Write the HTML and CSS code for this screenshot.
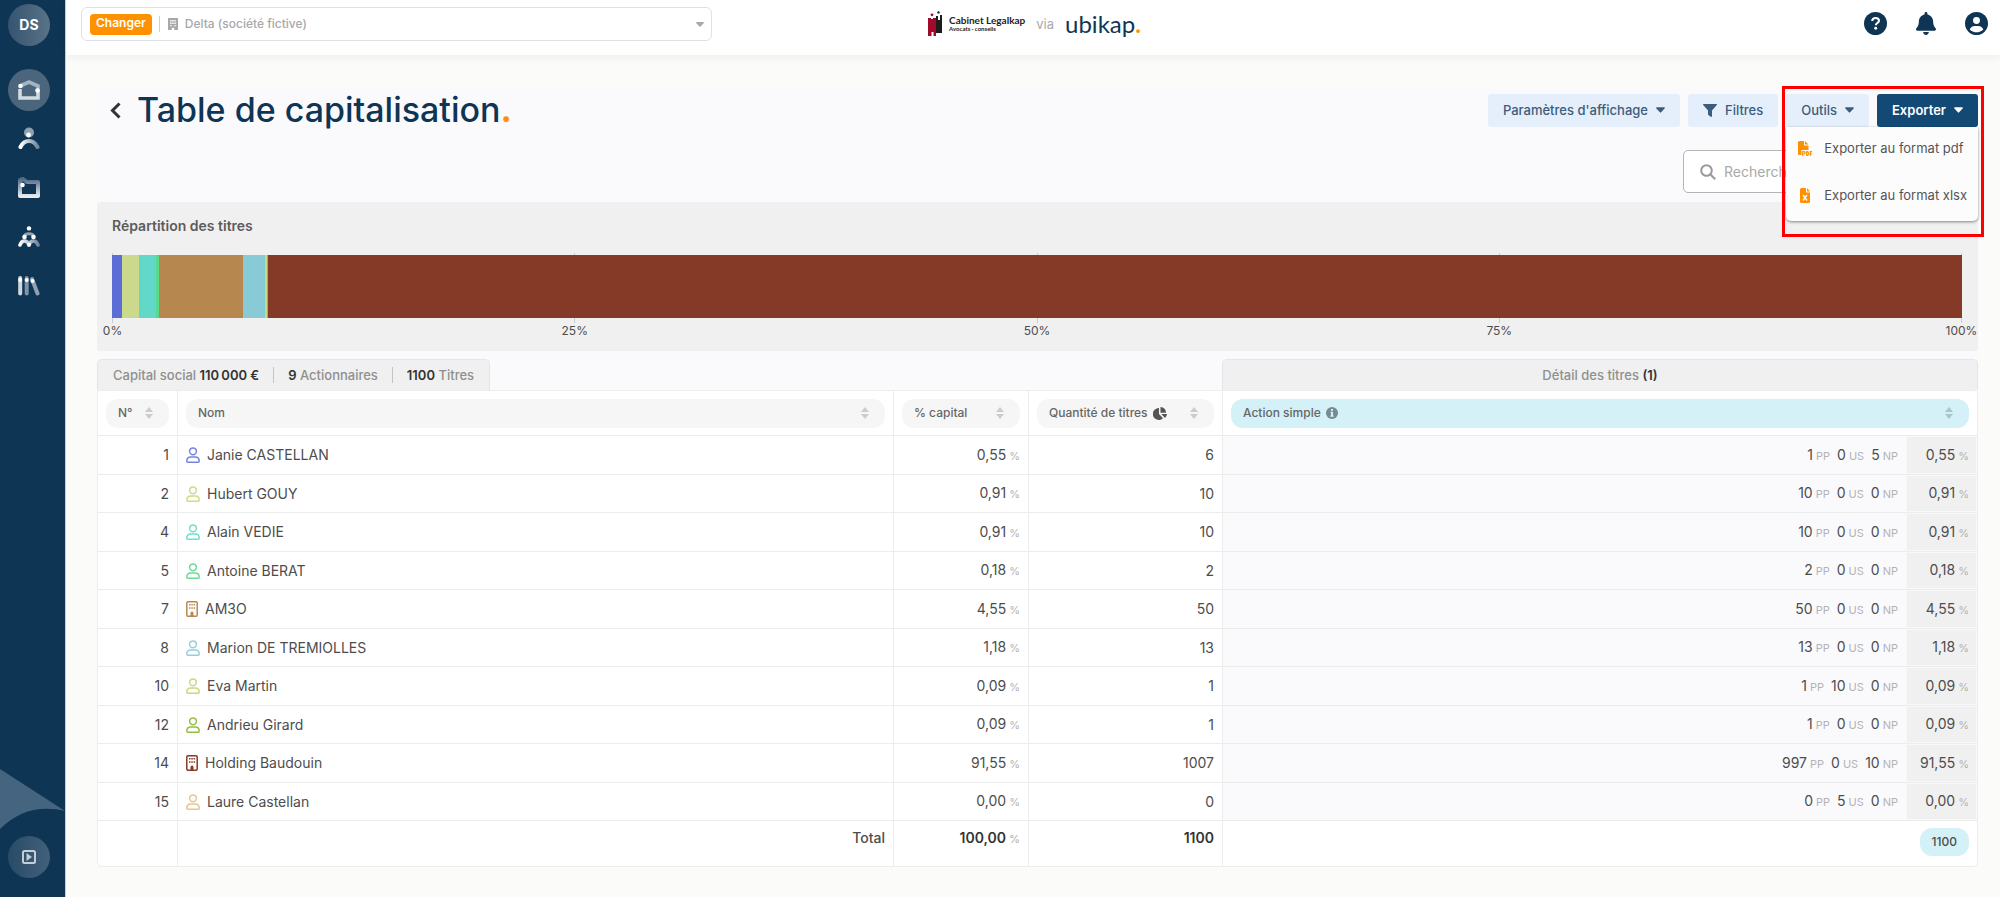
FILE: index.html
```html
<!DOCTYPE html>
<html lang="fr">
<head>
<meta charset="utf-8">
<title>Table de capitalisation</title>
<link rel="stylesheet" href="styles.css">
</head>
<body>
<svg class="defs" aria-hidden="true">
  <defs>
    <linearGradient id="fade-r" x1="0" x2="1" y1="0" y2="0"><stop offset="0" stop-color="#fff"/><stop offset="1" stop-color="#6f879b"/></linearGradient>
    <linearGradient id="fade-d" x1="0" x2="0" y1="0" y2="1"><stop offset="0" stop-color="#4f6b83"/><stop offset="1" stop-color="#e6ebef"/></linearGradient>
  </defs>
  <symbol id="caret" viewBox="0 0 10 6"><path d="M1 0h8c.8 0 1.200 .8.600 1.400L5.700 5.600a1 1 0 0 1-1.400 0L.4 1.400C-.2.8.2 0 1 0z"/></symbol>
  <symbol id="sort" viewBox="0 0 8 12"><path d="M4 0 8 5H0zM0 7h8l-4 5z"/></symbol>
  <symbol id="person" viewBox="0 0 14 16"><g fill="none" stroke="currentColor" stroke-width="1.500"><circle cx="7" cy="4.300" r="3.400"/><path d="M.8 14.200c0-2.700 1.600-4.200 4-4.200h4.400c2.400 0 4 1.500 4 4.200 0 .7-.3 1-1 1H1.800c-.7 0-1-.3-1-1z"/></g></symbol>
  <symbol id="building" viewBox="0 0 12 16"><rect x=".8" y=".8" width="10.400" height="14.400" rx="1.200" fill="none" stroke="currentColor" stroke-width="1.500"/><path fill="currentColor" d="M3 3h1.500v1.600H3zM5.300 3h1.500v1.600H5.300zM7.600 3h1.500v1.600H7.600zM3 6.200h1.500v1.600H3zM5.300 6.200h1.500v1.600H5.300zM7.600 6.200h1.500v1.600H7.600zM4.500 15v-3a1.500 1.500 0 0 1 3 0v3z"/></symbol>
</svg>
<div class="app">
  <nav class="sidebar" aria-label="Navigation">
    <a href="#" class="round avatar">DS</a>
    <a href="#" class="round home" aria-label="Accueil"><svg width="22" height="20" viewBox="0 0 22 20" fill="none" stroke-width="3.600"><path stroke="#a5b4c0" d="M2 6 11 2l9 4v4"/><path stroke="#d3dae0" d="M2 9v9h18v-8"/><circle cx="2.500" cy="6" r="2.300" fill="#fff"/><circle cx="19.500" cy="10.500" r="2.300" fill="#fff"/></svg></a>
    <a href="#" class="item" aria-label="Personnes"><svg width="22" height="23" viewBox="0 0 22 23" fill="none"><circle cx="11" cy="5.500" r="5" fill="#8fa1b0"/><circle cx="10.500" cy="8" r="2.400" fill="#fff"/><path stroke="url(#fade-r)" stroke-width="4" stroke-linecap="round" d="M2.500 20c2-4 5-6 8.500-6s6.500 2 8.500 6"/></svg></a>
    <a href="#" class="item" aria-label="Dossiers"><svg width="22" height="21" viewBox="0 0 22 21" fill="none"><path stroke="url(#fade-d)" stroke-width="4" stroke-linejoin="round" d="M2 19V3l3-1 4 3h11v14z"/><circle cx="4.500" cy="8" r="2.300" fill="#fff"/></svg></a>
    <a href="#" class="item" aria-label="Organisation"><svg width="22" height="21" viewBox="0 0 22 21" fill="none" stroke-linecap="round"><path stroke="url(#fade-r)" stroke-width="3.600" d="M2 19c1-3 2.500-4 4.500-4s3.500 1 4.500 4c1-3 2.500-4 4.500-4s3.500 1 4.500 4"/><path stroke="#8fa1b0" stroke-width="3" d="M6.500 10c1-3 8-3 9 0"/><circle cx="11" cy="2.400" r="2.200" fill="#fff"/><circle cx="6.500" cy="11" r="2.300" fill="#fff"/><circle cx="15.500" cy="11" r="2.300" fill="#fff"/><circle cx="11" cy="18.500" r="2" fill="#fff"/></svg></a>
    <a href="#" class="item" aria-label="Registres"><svg width="22" height="21" viewBox="0 0 22 21" fill="none" stroke-linecap="round" stroke-width="4"><path stroke="#cfd7dd" d="M2.200 3v15.500"/><path stroke="#7f94a6" d="M8.700 3v15.500"/><path stroke="#8fa1b0" d="M14 4l5.500 14.500"/><circle cx="2.200" cy="5" r="2" fill="#fff"/><circle cx="8.700" cy="5" r="2" fill="#fff"/><circle cx="14.500" cy="6" r="2" fill="#fff"/></svg></a>
    <div class="side-foot">
      <svg class="wave" viewBox="0 0 65 62" preserveAspectRatio="none"><path fill="#456480" d="M0 0 65 42C40 36 18 42 0 60z"/></svg>
      <a href="#" class="round video" aria-label="Tutoriels"><svg width="14" height="14" viewBox="0 0 14 14"><rect x="1" y="1" width="12" height="12" rx="1.500" fill="none" stroke="#c3ced7" stroke-width="2"/><path fill="#c3ced7" d="M4.500 3v8l5.500-4z"/></svg></a>
    </div>
  </nav>

  <div class="page">
    <header class="topbar">
      <div class="company">
        <button type="button" class="change">Changer</button>
        <span class="bar"></span>
        <svg class="grey" width="10" height="12" viewBox="0 0 10 12"><path fill="currentColor" fill-rule="evenodd" d="M0 0h10v12H6.200V9.800H3.800V12H0zM2.200 2v1.400h1.400V2zm2.100 0v1.400h1.400V2zm2.100 0v1.400h1.400V2zM2.200 4.600V6h1.400V4.600zm2.100 0V6h1.400V4.600zm2.100 0V6h1.400V4.600zM2.200 7v1.200h1.400V7zm4.200 0v1.200h1.400V7z"/></svg>
        <select aria-label="Société"><option>Delta (société fictive)</option></select>
        <svg class="grey drop" width="8" height="5"><use href="#caret"/></svg>
      </div>
      <div class="brand">
        <svg width="16" height="26" viewBox="0 0 16 26"><circle cx="4" cy="3.800" r="1.400" fill="#a3092b"/><circle cx="10.500" cy="1.400" r="1.200" fill="#1c1c1c"/><path fill="#1c1c1c" d="M8 5h2v4h2V4h2v18H8z"/><path fill="#a3092b" d="M0 7h3v1h2V7h3v18H5.500v-4h-2v4H0z"/></svg>
        <div class="firm"><strong>Cabinet Legalkap</strong><small>Avocats · conseils</small></div>
        <span class="via">via</span>
        <span class="ubikap">ubikap<i>.</i></span>
      </div>
      <div class="actions">
        <button type="button" aria-label="Aide"><svg width="23" height="23" viewBox="0 0 22 22"><circle cx="11" cy="11" r="11" fill="currentColor"/><path d="M7.800 8.600c.2-1.900 1.500-2.900 3.300-2.900 1.900 0 3.200 1 3.200 2.600 0 2.200-3 2.200-3 4.300" fill="none" stroke="#fff" stroke-width="2"/><circle cx="11.200" cy="15.600" r="1.400" fill="#fff"/></svg></button>
        <button type="button" aria-label="Notifications"><svg width="20" height="23" viewBox="0 0 448 512"><path fill="currentColor" d="M224 512c35.320 0 63.970-28.650 63.970-64H160.030c0 35.350 28.650 64 63.970 64zm215.390-149.710c-19.320-20.760-55.470-51.990-55.470-154.290 0-77.700-54.480-139.900-127.940-155.160V32c0-17.670-14.320-32-31.980-32s-31.980 14.330-31.980 32v20.840C118.560 68.100 64.080 130.300 64.080 208c0 102.300-36.150 133.530-55.470 154.290-6 6.450-8.660 14.160-8.610 21.710.11 16.400 12.980 32 32.100 32h383.800c19.120 0 32-15.600 32.100-32 .05-7.550-2.610-15.270-8.610-21.710z"/></svg></button>
        <button type="button" aria-label="Compte"><svg width="23" height="23" viewBox="0 0 22 22"><circle cx="11" cy="11" r="11" fill="currentColor"/><circle cx="11" cy="8.200" r="3.300" fill="#fff"/><path fill="#fff" d="M4.500 16.700c.9-2.300 2.500-3.400 4.700-3.400h3.600c2.200 0 3.800 1.100 4.700 3.400-3.400 3.600-9.600 3.600-13 0z"/></svg></button>
      </div>
    </header>

    <main class="content">
      <div class="heading">
        <a href="#" class="back" aria-label="Retour"><svg width="11" height="17" viewBox="0 0 11 17"><path d="M9.500 1.500 2.500 8.500l7 7" fill="none" stroke="currentColor" stroke-width="3"/></svg></a>
        <h1>Table de capitalisation<i>.</i></h1>
        <div class="toolbar">
          <button type="button" class="btn">Paramètres d'affichage <svg width="9" height="6"><use href="#caret"/></svg></button>
          <button type="button" class="btn"><svg width="14" height="13" viewBox="0 0 14 13"><path d="M.6 0h12.800c.6 0 .8.600.4 1L9 6.500V12c0 .8-.7 1.200-1.300.8L5.400 11a1 1 0 0 1-.4-.8V6.500L.2 1C-.2.600 0 0 .6 0z"/></svg>Filtres</button>
          <div class="export">
            <button type="button" class="btn">Outils <svg width="9" height="6"><use href="#caret"/></svg></button>
            <button type="button" class="btn primary">Exporter <svg width="9" height="6"><use href="#caret"/></svg></button>
            <div class="menu">
              <button type="button"><svg width="14" height="15" viewBox="0 0 14 15"><path fill="#ff9100" d="M1.500 0H6v3.500c0 .6.400 1 1 1h3.500V9H3.500v5h-2A1.500 1.500 0 0 1 0 12.500v-11A1.500 1.500 0 0 1 1.500 0zM7 0l3.500 3.500H7z"/><path fill="none" stroke="#ff9100" stroke-width="1.200" d="M4.700 15v-4.400H6a1.200 1.200 0 0 1 0 2.400H4.700M8.700 10.600v3.800h.5c1 0 1.300-.6 1.300-1.900s-.3-1.900-1.300-1.900zM12.300 15v-4.400H14M12.300 12.800h1.500"/></svg>Exporter au format pdf</button>
              <button type="button"><svg width="14" height="15" viewBox="0 0 14 15"><path fill="#ff9100" d="M3.500 0H8v3.500c0 .6.400 1 1 1h3v9a1.500 1.500 0 0 1-1.500 1.500h-7A1.500 1.500 0 0 1 2 13.500v-12A1.500 1.500 0 0 1 3.500 0zM9 0l3 3.500H9z"/><path d="m5 7 4 5.500M9 7l-4 5.500" stroke="#fff" stroke-width="1.300"/></svg>Exporter au format xlsx</button>
            </div>
            <div class="frame"></div>
          </div>
        </div>
      </div>
      <div class="search-row">
        <label class="search"><svg width="16" height="16" viewBox="0 0 16 16" fill="none" stroke="currentColor" stroke-width="2"><circle cx="6.500" cy="6.500" r="5.300"/><path d="m10.500 10.500 4.700 4.700"/></svg><input type="search" placeholder="Rechercher" aria-label="Rechercher"></label>
      </div>

      <section class="chart">
        <h2>Répartition des titres</h2>
        <div class="plot">
          <div class="grid"><span></span><span></span><span></span><span></span><span></span></div>
          <div class="stack">
            <span class="c1" style="width:0.5455%"></span><span class="c2" style="width:0.9091%"></span><span class="c3" style="width:0.9091%"></span><span class="c4" style="width:0.1818%"></span><span class="c5" style="width:4.5455%"></span><span class="c6" style="width:1.1818%"></span><span class="c7" style="width:0.0909%"></span><span class="c8" style="width:0.0909%"></span><span class="c9" style="width:91.5455%"></span>
          </div>
          <div class="axis"><span>0%</span><span>25%</span><span>50%</span><span>75%</span><span>100%</span></div>
        </div>
      </section>

      <div class="tabs">
        <div class="tab summary">
          <span>Capital social <b>110&#8239;000 €</b></span><span><b>9</b> Actionnaires</span><span><b>1100</b> Titres</span>
        </div>
        <div class="tab detail"><span>Détail des titres <b>(1)</b></span></div>
      </div>

      <table class="cap">
        <colgroup><col class="w-num"><col><col class="w-cap"><col class="w-qty"><col class="w-det"><col class="w-pct"></colgroup>
        <thead><tr>
          <th><div class="pill">N° <svg width="8" height="12"><use href="#sort"/></svg></div></th>
          <th><div class="pill">Nom <svg width="8" height="12"><use href="#sort"/></svg></div></th>
          <th><div class="pill">% capital <svg width="8" height="12"><use href="#sort"/></svg></div></th>
          <th><div class="pill"><span>Quantité de titres</span><svg class="mark dark" width="14" height="13" viewBox="0 0 14 13"><path d="M6 1v6l4 4.300A6 6 0 1 1 6 1zM7.500 0A6 6 0 0 1 13 5.700H7.500zM8.300 7H14a6 6 0 0 1-2 4z"/></svg><svg width="8" height="12"><use href="#sort"/></svg></div></th>
          <th colspan="2"><div class="pill blue"><span>Action simple</span><svg class="mark" width="12" height="12" viewBox="0 0 12 12"><circle cx="6" cy="6" r="6"/><path fill="#d4f1f7" d="M5 2h2v1.700H5zM4.500 4.800H7v3.700h.8v1.200H4.300V8.500H5V6h-.5z"/></svg><svg width="8" height="12"><use href="#sort"/></svg></div></th>
        </tr></thead>
        <tbody>
          <tr><td>1</td><td><svg class="t1" width="14" height="16"><use href="#person"/></svg>Janie CASTELLAN</td><td>0,55<small>%</small></td><td>6</td><td><span>1<small>PP</small></span><span>0<small>US</small></span><span>5<small>NP</small></span></td><td>0,55<small>%</small></td></tr>
          <tr><td>2</td><td><svg class="t2" width="14" height="16"><use href="#person"/></svg>Hubert GOUY</td><td>0,91<small>%</small></td><td>10</td><td><span>10<small>PP</small></span><span>0<small>US</small></span><span>0<small>NP</small></span></td><td>0,91<small>%</small></td></tr>
          <tr><td>4</td><td><svg class="t3" width="14" height="16"><use href="#person"/></svg>Alain VEDIE</td><td>0,91<small>%</small></td><td>10</td><td><span>10<small>PP</small></span><span>0<small>US</small></span><span>0<small>NP</small></span></td><td>0,91<small>%</small></td></tr>
          <tr><td>5</td><td><svg class="t4" width="14" height="16"><use href="#person"/></svg>Antoine BERAT</td><td>0,18<small>%</small></td><td>2</td><td><span>2<small>PP</small></span><span>0<small>US</small></span><span>0<small>NP</small></span></td><td>0,18<small>%</small></td></tr>
          <tr><td>7</td><td><svg class="t5" width="12" height="16"><use href="#building"/></svg>AM3O</td><td>4,55<small>%</small></td><td>50</td><td><span>50<small>PP</small></span><span>0<small>US</small></span><span>0<small>NP</small></span></td><td>4,55<small>%</small></td></tr>
          <tr><td>8</td><td><svg class="t6" width="14" height="16"><use href="#person"/></svg>Marion DE TREMIOLLES</td><td>1,18<small>%</small></td><td>13</td><td><span>13<small>PP</small></span><span>0<small>US</small></span><span>0<small>NP</small></span></td><td>1,18<small>%</small></td></tr>
          <tr><td>10</td><td><svg class="t7" width="14" height="16"><use href="#person"/></svg>Eva Martin</td><td>0,09<small>%</small></td><td>1</td><td><span>1<small>PP</small></span><span>10<small>US</small></span><span>0<small>NP</small></span></td><td>0,09<small>%</small></td></tr>
          <tr><td>12</td><td><svg class="t8" width="14" height="16"><use href="#person"/></svg>Andrieu Girard</td><td>0,09<small>%</small></td><td>1</td><td><span>1<small>PP</small></span><span>0<small>US</small></span><span>0<small>NP</small></span></td><td>0,09<small>%</small></td></tr>
          <tr><td>14</td><td><svg class="t9" width="12" height="16"><use href="#building"/></svg>Holding Baudouin</td><td>91,55<small>%</small></td><td>1007</td><td><span>997<small>PP</small></span><span>0<small>US</small></span><span>10<small>NP</small></span></td><td>91,55<small>%</small></td></tr>
          <tr><td>15</td><td><svg class="t10" width="14" height="16"><use href="#person"/></svg>Laure Castellan</td><td>0,00<small>%</small></td><td>0</td><td><span>0<small>PP</small></span><span>5<small>US</small></span><span>0<small>NP</small></span></td><td>0,00<small>%</small></td></tr>
        </tbody>
        <tfoot><tr><td></td><td>Total</td><td><b>100,00</b><small>%</small></td><td><b>1100</b></td><td colspan="2"><span class="sum">1100</span></td></tr></tfoot>
      </table>
    </main>
  </div>
</div>
</body>
</html>
```
FILE: styles.css
```css
* { box-sizing: border-box; }
body { margin: 0; background: #fbfbf9; color: #4d4d4d; font: 14px/20px Inter, "Liberation Sans", sans-serif; }
button, input, select { font: inherit; color: inherit; }
button { border: 0; cursor: pointer; }
a { color: inherit; text-decoration: none; }
svg { flex: none; }
svg:not([fill]) { fill: currentColor; }
i { font-style: normal; font-weight: 700; color: #ff9100; }
.defs { position: absolute; width: 0; height: 0; }
.app { display: flex; min-height: 100vh; }

.sidebar { flex: none; width: 65px; display: flex; flex-direction: column; padding: 4px 0 0; background: #0f3554; }
.sidebar a { display: flex; align-items: center; justify-content: center; margin-left: 8px; width: 42px; }
.round { height: 42px; border-radius: 50%; background: linear-gradient(90deg, #365470, #597388); }
.avatar { color: #fff; font-weight: 700; margin-bottom: 23px; }
.home { margin-bottom: 3px; background: #4a657c; }
.item { height: 49px; }
.sidebar .video { background: linear-gradient(90deg, #294b67, #42607a); margin-top: 5px; }
.side-foot { margin-top: auto; padding-bottom: 19px; }
.wave { display: block; width: 65px; height: 62px; }

.page { flex: 1; min-width: 0; border-left: 1px solid #c9d0d8; }
.topbar { display: grid; grid-template-columns: 1fr auto 1fr; align-items: start; height: 55px; padding: 7px 12px 0 15px; background: #fff; box-shadow: 0 2px 8px rgba(0, 0, 0, .06); }
.company { display: flex; align-items: center; width: 631px; max-width: 96%; height: 34px; padding: 0 7px 0 8px; border: 1px solid #dfe2e5; border-radius: 6px; }
.change { height: 21px; padding: 0 6px 2px; border-radius: 4px; background: #ff9100; color: #fff; font-size: 12px; font-weight: 600; line-height: 18px; }
.company .bar { width: 1px; height: 16px; margin: 0 8px 0 7px; background: #cfcfcf; }
.grey { color: #a8a8a8; }
.company select { flex: 1; margin-left: 7px; padding: 0; border: 0; background: none; appearance: none; color: #a8a8a8; font-size: 12px; font-weight: 500; }
.drop { pointer-events: none; }
.brand { display: flex; align-items: center; height: 34px; }
.firm { margin-left: 5px; display: flex; flex-direction: column; color: #222; font-family: Lato, sans-serif; }
.firm strong { font-size: 10px; line-height: 10px; }
.firm small { font-size: 6px; line-height: 8px; font-weight: 700; }
.via { margin: 0 11px; color: #aaa; font-size: 13px; }
.ubikap { color: #0f3554; font: 24px/30px Lato, sans-serif; }
.actions { display: flex; justify-content: flex-end; gap: 29px; padding-top: 5px; color: #0f3554; }
.actions button { display: flex; padding: 0; background: none; }

.content { margin: 33px 22px 26px 31px; background: #fafafd; }
.heading { display: flex; align-items: center; padding-top: 1px; }
.back { display: flex; margin-left: 13px; color: #333; }
h1 { margin: 0 auto 0 16px; color: #0f3554; font-size: 34px; font-weight: 500; line-height: 42px; }
.toolbar, .export { display: flex; gap: 8px; }
.export { position: relative; }
.btn { display: flex; align-items: center; gap: 8px; height: 33px; padding: 0 15px; border-radius: 3px; background: #e5eefb; color: #3b5d7c; font-size: 13px; font-weight: 500; }
.primary { background: #134a75; color: #fff; font-weight: 600; }
.menu { position: absolute; z-index: 1; top: 100%; left: 0; right: 0; background: #fcfcfc; border-radius: 0 0 5px 5px; box-shadow: 0 1px 3px rgba(0, 0, 0, .45); }
.menu button { display: flex; align-items: center; gap: 12px; width: 100%; height: 47px; padding: 0 0 4px 12px; background: none; color: #555; font-size: 13px; white-space: nowrap; }
.frame { position: absolute; z-index: 2; top: -8px; left: -4px; right: -6px; height: 151px; border: 3px solid #f00; pointer-events: none; }
.search-row { display: flex; justify-content: flex-end; padding: 19px 0 9px; }
.search { display: flex; align-items: center; gap: 8px; width: 295px; height: 43px; padding: 0 16px; border: 1px solid #b5b5b5; border-radius: 5px; background: #fff; color: #999; }
.search input { flex: 1; min-width: 0; border: 0; outline: 0; padding: 0; background: none; }
.search input::placeholder { color: #a9a9a9; }

.chart { padding: 14px 16px 12px 15px; border-radius: 3px; background: #f0f0f0; }
h2 { margin: 0; color: #5c5c5c; font-size: 14px; font-weight: 600; line-height: 20px; }
.plot { margin-top: 17px; }
.grid, .axis { display: flex; justify-content: space-between; }
.grid span { width: 1px; height: 2px; background: #c5cdd6; }
.stack { display: flex; height: 63px; }
.c1 { background: #5c6dd6; } .c2 { background: #cbd98c; } .c3 { background: #62d9c8; } .c4 { background: #5bd98a; }
.c5 { background: #b68850; } .c6 { background: #89cad7; } .c7 { background: #c3dc80; } .c8 { background: #94bf3f; } .c9 { background: #853a28; }
.axis span { display: flex; flex-direction: column; align-items: center; width: 1px; font-size: 12px; line-height: 16px; white-space: nowrap; }
.axis span::before { content: ""; width: 1px; height: 5px; background: #c5cdd6; }

.tabs { display: flex; justify-content: space-between; margin-top: 8px; color: #8f8f8f; font-size: 13px; font-weight: 500; }
.tabs b { color: #333; font-weight: 600; }
.tab { display: flex; align-items: center; height: 31px; border: 1px solid #e5e5e8; border-bottom: 0; border-radius: 5px 5px 0 0; background: #f0f0f0; }
.summary { padding: 0 1px; }
.summary span { padding: 0 14px; line-height: 16px; }
.summary span + span { border-left: 1px solid #c4c4c4; }
.detail { width: 756px; justify-content: center; }

.cap { width: 100%; table-layout: fixed; border-collapse: separate; border-spacing: 0; border: 1px solid #ededed; border-radius: 0 4px 5px 5px; background: #fff; }
.w-num { width: 80px; } .w-cap { width: 135px; } .w-qty { width: 194px; } .w-det { width: 683px; } .w-pct { width: 71px; }
.cap th { height: 45px; padding: 0 8px; border-bottom: 1px solid #ececec; border-right: 1px solid #ececec; }
.pill { display: flex; align-items: center; height: 29px; padding: 0 16px 0 12px; border-radius: 12px; background: #f6f6f6; color: #666; font-size: 12px; font-weight: 500; white-space: nowrap; }
.pill svg:last-child { margin-left: auto; color: #ccc; }
.pill .mark { margin-left: 5px; color: #758b8f; }
.pill .dark { color: #555; }
.blue { background: #d4f1f7; }
.blue svg:last-child { color: #a9c6ce; }
.cap td { padding: 0 8px; border-bottom: 1px solid #ececec; border-right: 1px solid #ececec; text-align: right; white-space: nowrap; }
.cap tr > :last-child { border-right: 0; }
.cap tbody td { height: 38px; }
.cap tbody tr:nth-child(odd) td { height: 39px; }
.cap tbody td:nth-child(2) { text-align: left; }
.cap td svg { margin-right: 7px; vertical-align: -3px; }
.cap small { margin-left: 3px; color: #b3b3b3; font-size: 11px; }
.cap tbody td:nth-child(5) { background: #fafafd; border-right: 0; }
.cap td span + span { margin-left: 7px; }
.cap tbody td:nth-child(6) { background: #f0f0f0; box-shadow: inset 0 0 0 1px #f8f8fa; }
.cap tfoot td { height: 45px; padding-top: 7px; vertical-align: top; border-bottom: 0; font-weight: 500; }
.cap tfoot b { color: #333; font-weight: 600; }
.cap tfoot .sum { display: inline-block; height: 28px; padding: 0 12px; border-radius: 12px; background: #d4f1f7; font-size: 12px; line-height: 28px; }
.t1 { color: #7583e0; } .t2 { color: #cddb8c; } .t3 { color: #6fdfce; } .t4 { color: #6ddb97; } .t5 { color: #b88850; }
.t6 { color: #95cfdc; } .t7 { color: #c3dc80; } .t8 { color: #94bf3f; } .t9 { color: #853a28; } .t10 { color: #e3c793; }
```
